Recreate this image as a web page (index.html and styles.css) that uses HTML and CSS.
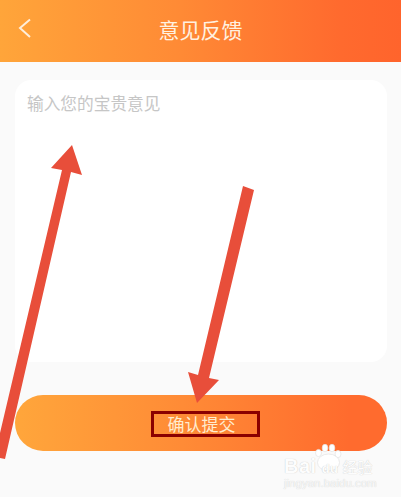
FILE: index.html
```html
<!DOCTYPE html>
<html lang="zh">
<head>
<meta charset="utf-8">
<title>意见反馈</title>
<link rel="stylesheet" href="styles.css">
</head>
<body>
<div class="page">
  <header class="header">
    <svg class="back" width="16" height="24" viewBox="0 0 16 24"><path d="M14 3.500 L4 12 L14 21" fill="none" stroke="#ffeeda" stroke-width="2"/></svg>
    <h1 class="title">意见反馈</h1>
  </header>
  <main class="content">
    <div class="card"><span class="placeholder">输入您的宝贵意见</span></div>
    <button class="submit"><span class="submit-label">确认提交</span></button>
  </main>
  <svg class="arrows" width="401" height="497" viewBox="0 0 401 497">
    <path d="M72 145 L82 175 L71 172 L5 459 L0 458 L0 433 L62 170 L51 168 Z" fill="#e84e3a"/>
    <path d="M243 186 L254 190 L209 378 L219 380 L197 403 L188 372 L198 375 Z" fill="#e84e3a"/>
  </svg>
  <div class="mark">
    <svg class="paw" width="27" height="28" viewBox="0 0 27 28"><g fill="#ffffff" stroke="#e2e2e2" stroke-width=".7"><ellipse cx="3.500" cy="9" rx="3" ry="3.600"/><ellipse cx="10" cy="4" rx="2.800" ry="3.800"/><ellipse cx="17" cy="4" rx="2.800" ry="3.800"/><ellipse cx="23" cy="10" rx="3" ry="3.600"/><ellipse cx="13.500" cy="18.500" rx="11" ry="8.500"/></g></svg>
    <div class="mark-logo">Bai<span class="mark-du">du</span><span class="mark-cn">经验</span></div>
    <div class="mark-url">jingyan.baidu.com</div>
  </div>
</div>
</body>
</html>
```
FILE: styles.css
```css
* { box-sizing: border-box; }
html, body { margin: 0; padding: 0; }
body { width: 401px; height: 497px; overflow: hidden; background: #fafafa; font-family: "Noto Sans CJK SC", "Noto Sans", sans-serif; }
.page { position: relative; width: 401px; height: 497px; }
.header { height: 62px; display: flex; align-items: center; justify-content: center; position: relative; background: linear-gradient(90deg, #ffa53a 0%, #ff8a35 45%, #ff6a2e 85%, #ff642c 100%); }
.back { position: absolute; left: 16px; top: 16px; }
.title { margin: 0; font-size: 21px; font-weight: 400; color: #fff1e0; line-height: 1; position: relative; top: -2px; }
.content { display: flex; flex-direction: column; padding: 18px 14px 0 15px; gap: 33px; }
.card { height: 282px; background: #fff; border-radius: 16px; padding: 12px; }
.placeholder { font-size: 16.700px; color: #c6c6c6; line-height: 22px; display: block; }
.submit { height: 56px; border: 0; padding: 0; border-radius: 28px; background: linear-gradient(90deg, #ffa63b 0%, #ff8b36 45%, #ff6b2e 90%); display: flex; align-items: center; justify-content: center; font-family: inherit; }
.submit-label { display: flex; align-items: center; justify-content: center; width: 109px; height: 26px; padding-right: 8px; border: 3px solid #8b0000; font-size: 17px; color: #ffeccf; line-height: 1; margin-left: 9px; margin-top: 1px; }
.arrows { position: absolute; left: 0; top: 0; pointer-events: none; }
.mark { position: absolute; left: 284px; top: 444px; width: 90px; height: 44px; color: #fff; }
.paw { position: absolute; left: 31px; top: 0; }
.mark-logo { position: absolute; left: 0; top: 11px; font-family: "Liberation Sans", sans-serif; font-size: 20px; font-weight: 700; letter-spacing: .5px; line-height: 22px; white-space: nowrap; color: #fdfdfd; text-shadow: 0 0 1px #bdbdbd; }
.mark-du { font-size: 13px; margin-left: 5px; color: #fdfdfd; }
.mark-cn { font-family: "Noto Sans CJK SC", sans-serif; font-size: 15px; font-weight: 400; letter-spacing: 0; margin-left: 4px; }
.mark-url { position: absolute; left: 0; top: 33px; font-family: "Liberation Sans", sans-serif; font-size: 11.500px; white-space: nowrap; color: #f8f8f8; text-shadow: 0 0 1px #c8c8c8; line-height: 12px; }
```
